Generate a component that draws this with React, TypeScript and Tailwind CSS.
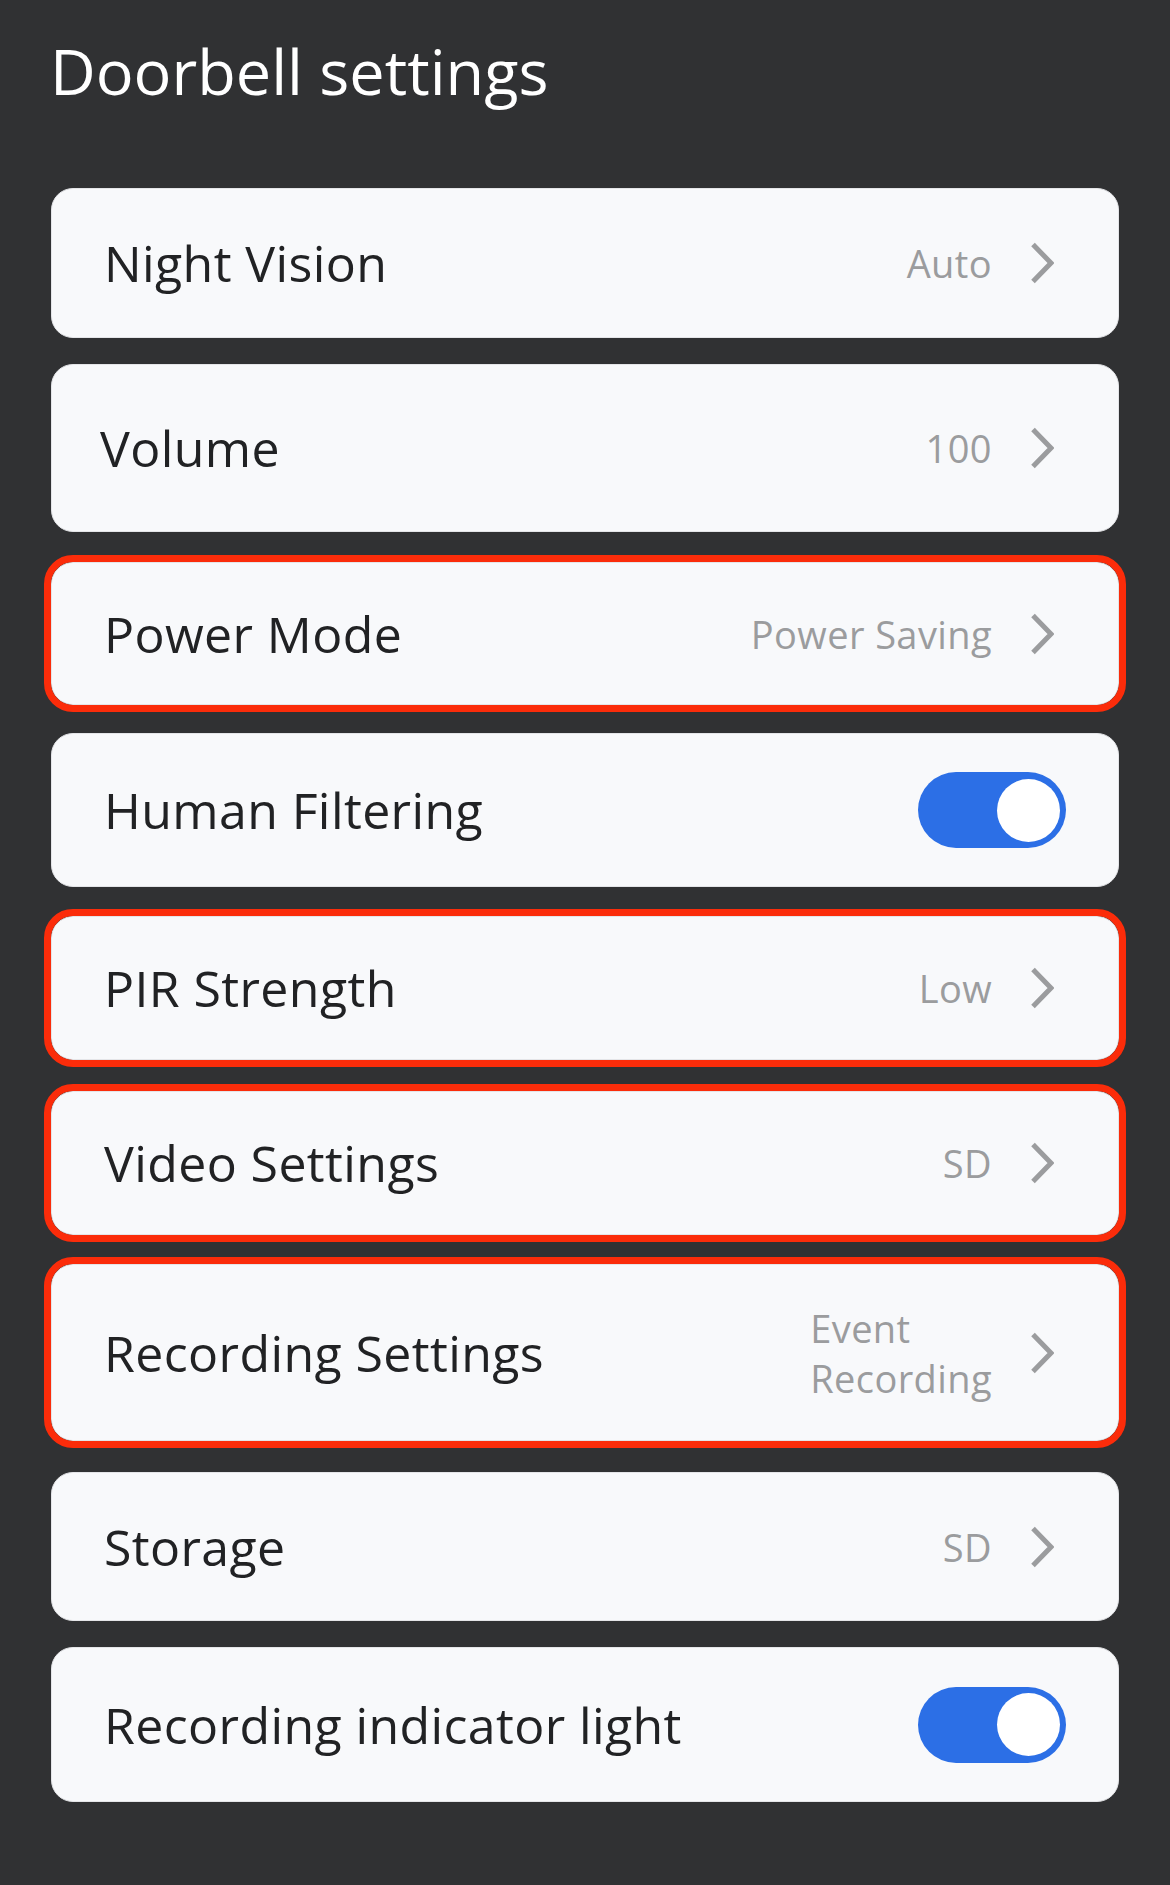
type Row = {
  label: string;
  value?: string[];
  toggle?: boolean;
  marked?: boolean;
  box: string;
};

const rows: Row[] = [
  { label: "Night Vision", value: ["Auto"], box: "mt-[85px] h-[150px] pl-[52px]" },
  { label: "Volume", value: ["100"], box: "mt-[26px] h-[168px] pl-[48px]" },
  { label: "Power Mode", value: ["Power Saving"], marked: true, box: "mt-[30px] h-[143px] pl-[52px]" },
  { label: "Human Filtering", toggle: true, box: "mt-[28px] h-[154px] pl-[52px]" },
  { label: "PIR Strength", value: ["Low"], marked: true, box: "mt-[29px] h-[144px] pl-[52px]" },
  { label: "Video Settings", value: ["SD"], marked: true, box: "mt-[31px] h-[144px] pl-[52px]" },
  { label: "Recording Settings", value: ["Event", "Recording"], marked: true, box: "mt-[29px] h-[177px] pl-[52px]" },
  { label: "Storage", value: ["SD"], box: "mt-[31px] h-[149px] pl-[52px]" },
  { label: "Recording indicator light", toggle: true, box: "mt-[26px] h-[155px] pl-[52px]" },
];

function Chevron() {
  return (
    <svg width="24" height="42" viewBox="0 0 24 42" fill="none">
      <polyline points="3,2.5 21,21 3,39.5" stroke="#9b9c9e" strokeWidth="5" strokeLinejoin="miter" />
    </svg>
  );
}

function Toggle() {
  return (
    <div className="flex h-[76px] w-[148px] items-center justify-end rounded-full bg-[#2c6fe6] pr-[6px]">
      <div className="h-[63px] w-[63px] rounded-full bg-white" />
    </div>
  );
}

function SettingRow({ row }: { row: Row }) {
  return (
    <div
      className={`${row.box} flex items-center justify-between rounded-[22px] border border-[#e4e5e8] bg-[#f8f9fb] ${
        row.toggle ? "pr-[52px]" : "pr-[64px]"
      } ${row.marked ? "outline-[7px] outline-solid outline-[#fb2c0a]" : ""}`}
    >
      <span className="text-[50px] leading-none tracking-[0.4px] text-[#212224]">{row.label}</span>
      {row.toggle ? (
        <Toggle />
      ) : (
        <div className="flex items-center gap-[38px]">
          <div className="flex flex-col text-left text-[38px] leading-[50px] tracking-[0.4px] text-[#9b9c9e]">
            {row.value?.map((v) => (
              <span key={v}>{v}</span>
            ))}
          </div>
          <Chevron />
        </div>
      )}
    </div>
  );
}

export default function App() {
  return (
    <div
      className="min-h-[1885px] w-full bg-[#303133] px-[51px] pt-[39px]"
      style={{ fontFamily: '"Open Sans", "Noto Sans", sans-serif' }}
    >
      <h1 className="-ml-[1px] text-[63px] leading-[64px] font-normal text-white">Doorbell settings</h1>
      <div className="flex flex-col">
        {rows.map((r) => (
          <SettingRow key={r.label} row={r} />
        ))}
      </div>
    </div>
  );
}
